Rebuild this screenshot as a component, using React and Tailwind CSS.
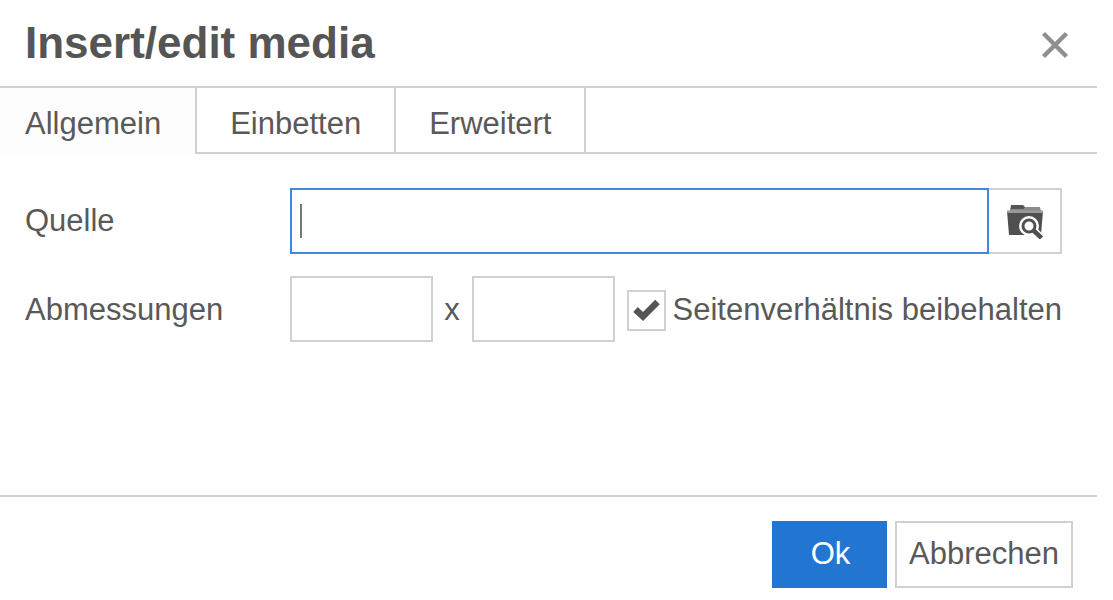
import React, { useState } from 'react';

const tabs = ['Allgemein', 'Einbetten', 'Erweitert'];

function CloseIcon() {
  return (
    <svg viewBox="0 0 28 28" className="w-7 h-7" fill="none" stroke="#8f8f8f" strokeWidth="4.4">
      <path d="M2.5 2.500L25.500 25.500M25.500 2.500L2.500 25.500" />
    </svg>
  );
}

function BrowseIcon() {
  return (
    <svg viewBox="0 0 36 34" className="w-9 h-[34px]">
      <path d="M4 0h12l2 2v4H3z" fill="#555" />
      <path d="M18 2H33l1 4H3l0.500-2h13z" fill="#8c8c8c" />
      <path d="M0 6h36l-2 24H2z" fill="#505050" />
      <path d="M0 5.500h36l-0.200 2.500H0.200z" fill="#9a9a9a" />
      <path d="M22 21L36 35" stroke="#fff" strokeWidth="8" />
      <circle cx="22" cy="21" r="10" fill="#fff" />
      <circle cx="22" cy="21" r="6" fill="#fff" stroke="#505050" strokeWidth="3" />
      <path d="M26 25L34.500 33" stroke="#505050" strokeWidth="4.500" />
    </svg>
  );
}

function App() {
  const [activeTab, setActiveTab] = useState('Allgemein');
  const [formData, setFormData] = useState({
    source: '',
    width: '',
    height: '',
    constrain: true,
  });

  const handleChange = (e) => {
    const { name, value, type, checked } = e.target;
    setFormData({
      ...formData,
      [name]: type === 'checkbox' ? checked : value,
    });
  };

  return (
    <div className="bg-white pr-4 font-['Liberation_Sans',Arial,sans-serif] text-[31px] leading-9 text-[#595959]">
      <div className="flex items-center justify-between h-[88px] pl-[25px] pr-7 border-b-2 border-[#d0d0d0]">
        <h1 className="text-[44px] leading-[52px] font-bold text-[#555]">Insert/edit media</h1>
        <button type="button" aria-label="Schließen" className="mt-1">
          <CloseIcon />
        </button>
      </div>

      <div role="tablist" className="flex h-[66px]">
        {tabs.map((tab) => (
          <button
            key={tab}
            type="button"
            role="tab"
            aria-selected={tab === activeTab}
            onClick={() => setActiveTab(tab)}
            className={`px-[33px] first:pl-[25px] first:pr-[34px] pt-2 border-r-2 border-[#d0d0d0] ${
              tab === activeTab ? 'pb-0.5 bg-[#fdfdfd]' : 'border-b-2'
            }`}
          >
            {tab}
          </button>
        ))}
        <div className="flex-1 border-b-2 border-[#d0d0d0]" />
      </div>

      <form onSubmit={(e) => e.preventDefault()}>
        <div className="flex flex-col gap-[22px] pt-[34px] pb-[153px] pl-[25px] pr-[35px]">
          <div className="flex items-center">
            <label htmlFor="source" className="w-[265px]">Quelle</label>
            <div className="relative flex-1">
              <input
                id="source"
                type="text"
                name="source"
                value={formData.source}
                onChange={handleChange}
                className="block w-full h-[66px] px-2 border-2 border-[#4088dc] outline-none caret-transparent"
              />
              {/* text cursor of the focused field */}
              {formData.source === '' && (
                <span className="absolute left-[10px] top-4 w-0.5 h-[34px] bg-[#777]" />
              )}
            </div>
            <button
              type="button"
              aria-label="Durchsuchen"
              className="flex items-center justify-center w-[73px] h-[66px] pt-0.5 border-2 border-l-0 border-[#d0d0d0]"
            >
              <BrowseIcon />
            </button>
          </div>

          <div className="flex items-center">
            <label htmlFor="width" className="w-[265px] pt-0.5">Abmessungen</label>
            <input
              id="width"
              type="text"
              name="width"
              value={formData.width}
              onChange={handleChange}
              className="w-[143px] h-[66px] px-2 border-2 border-[#d0d0d0] outline-none"
            />
            <span className="w-[39px] pt-0.5 text-center">x</span>
            <input
              type="text"
              name="height"
              aria-label="Höhe"
              value={formData.height}
              onChange={handleChange}
              className="w-[143px] h-[66px] px-2 border-2 border-[#d0d0d0] outline-none"
            />
            <label className="flex items-center gap-[7px] ml-3 pt-0.5 whitespace-nowrap">
              <span className="relative">
                <input
                  type="checkbox"
                  name="constrain"
                  checked={formData.constrain}
                  onChange={handleChange}
                  className="peer appearance-none block w-[39px] h-[41px] border-2 border-[#d0d0d0]"
                />
                <svg
                  viewBox="0 0 39 41"
                  className="absolute inset-0 w-[39px] h-[41px] pointer-events-none invisible peer-checked:visible"
                  fill="none"
                  stroke="#555"
                  strokeWidth="6.500"
                >
                  <path d="M8.500 19.500L16 26.500L30.500 12" />
                </svg>
              </span>
              Seitenverhältnis beibehalten
            </label>
          </div>
        </div>

        <div className="flex justify-end gap-2 pt-6 pb-3 pr-6 border-t-2 border-[#d0d0d0]">
          <button type="submit" className="w-[115px] h-[67px] pb-0.5 pl-0.5 bg-[#2276d2] text-white">
            Ok
          </button>
          <button type="button" className="w-[178px] h-[67px] pb-0.5 border-2 border-[#d0d0d0]">
            Abbrechen
          </button>
        </div>
      </form>
    </div>
  );
}

export default App;
